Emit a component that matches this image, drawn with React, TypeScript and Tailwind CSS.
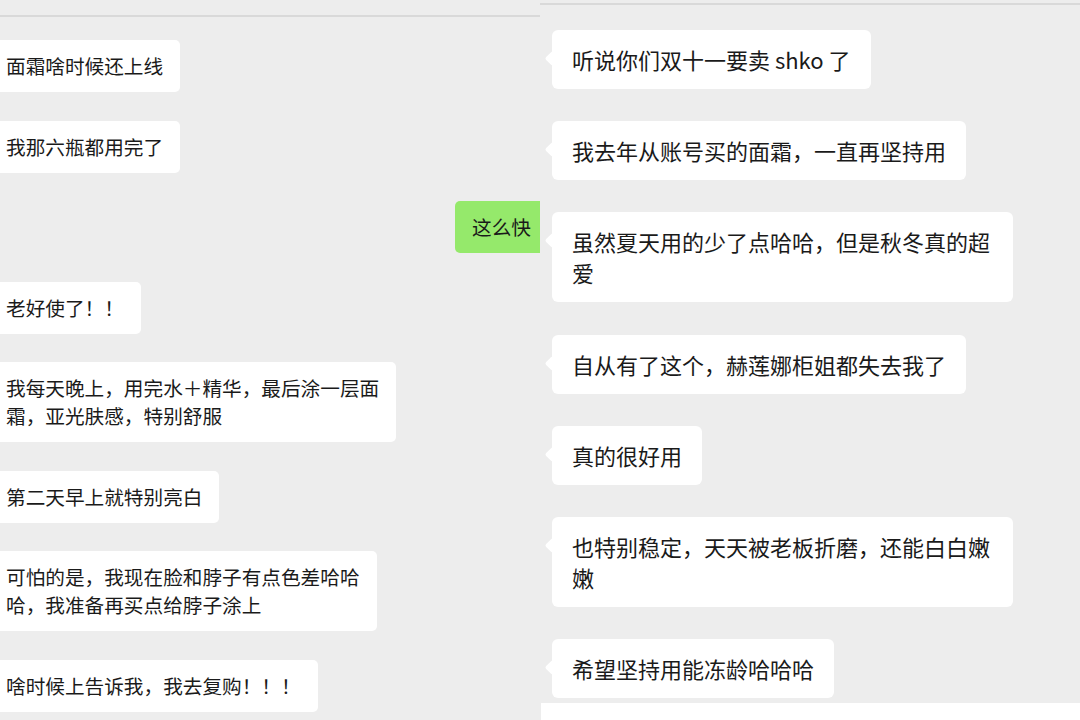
type Msg = { lines: string[]; me?: boolean; wide?: boolean };

const leftMsgs: Msg[] = [
  { lines: ["面霜啥时候还上线"] },
  { lines: ["我那六瓶都用完了"] },
  { lines: ["这么快"], me: true },
  { lines: ["老好使了！！"] },
  { lines: ["我每天晚上，用完水＋精华，最后涂一层面", "霜，亚光肤感，特别舒服"] },
  { lines: ["第二天早上就特别亮白"] },
  { lines: ["可怕的是，我现在脸和脖子有点色差哈哈", "哈，我准备再买点给脖子涂上"] },
  { lines: ["啥时候上告诉我，我去复购！！！"] },
];

const rightMsgs: Msg[] = [
  { lines: ["听说你们双十一要卖 shko 了"] },
  { lines: ["我去年从账号买的面霜，一直再坚持用"] },
  { lines: ["虽然夏天用的少了点哈哈，但是秋冬真的超", "爱"], wide: true },
  { lines: ["自从有了这个，赫莲娜柜姐都失去我了"] },
  { lines: ["真的很好用"] },
  { lines: ["也特别稳定，天天被老板折磨，还能白白嫩", "嫩"], wide: true },
  { lines: ["希望坚持用能冻龄哈哈哈"] },
];

function LeftPanel() {
  return (
    <div className="w-[540px] h-full shrink-0 overflow-hidden flex flex-col">
      <div className="mt-[15px] h-[2px] bg-[#d9d9d9]" />
      <div className="mt-[23px] flex flex-col gap-[28.5px]">
        {leftMsgs.map((m, i) =>
          m.me ? (
            <div
              key={i}
              className="self-end mr-[-9px] rounded-[5px] bg-[#95e96b] pl-[17px] pr-[18px] py-[12px] text-[19.65px] leading-[28px] whitespace-nowrap"
            >
              {m.lines[0]}
            </div>
          ) : (
            <div
              key={i}
              className="self-start rounded-r-[5px] bg-white pl-[6px] pr-[17px] py-[12px] text-[19.65px] leading-[28px] whitespace-nowrap"
            >
              {m.lines.map((l, j) => (
                <div key={j}>{l}</div>
              ))}
            </div>
          )
        )}
      </div>
    </div>
  );
}

function RightPanel() {
  return (
    <div className="w-[540px] h-full shrink-0 flex flex-col">
      <div className="mt-[3px] h-[2px] bg-[#d9d9d9]" />
      <div className="mt-[25px] pl-[12px] flex flex-col gap-[32.2px]">
        {rightMsgs.map((m, i) => (
          <div
            key={i}
            className={`relative self-start rounded-[6px] bg-white px-5 py-[14px] text-[22px] leading-[31px] whitespace-nowrap ${
              m.wide ? "w-[461px]" : ""
            }`}
          >
            <span className="absolute left-[-5px] top-[23px] w-[11px] h-[11px] rotate-45 rounded-[2px] bg-white" />
            {m.lines.map((l, j) => (
              <div key={j} className="relative">
                {l}
              </div>
            ))}
          </div>
        ))}
      </div>
      <div className="mt-auto h-[17px] ml-[1px] bg-white" />
    </div>
  );
}

export default function App() {
  return (
    <div className="w-[1080px] h-[720px] overflow-hidden flex bg-[#ededed] text-[#1a1a1a] font-['Noto_Sans_CJK_SC','Noto_Sans',sans-serif]">
      <LeftPanel />
      <RightPanel />
    </div>
  );
}
